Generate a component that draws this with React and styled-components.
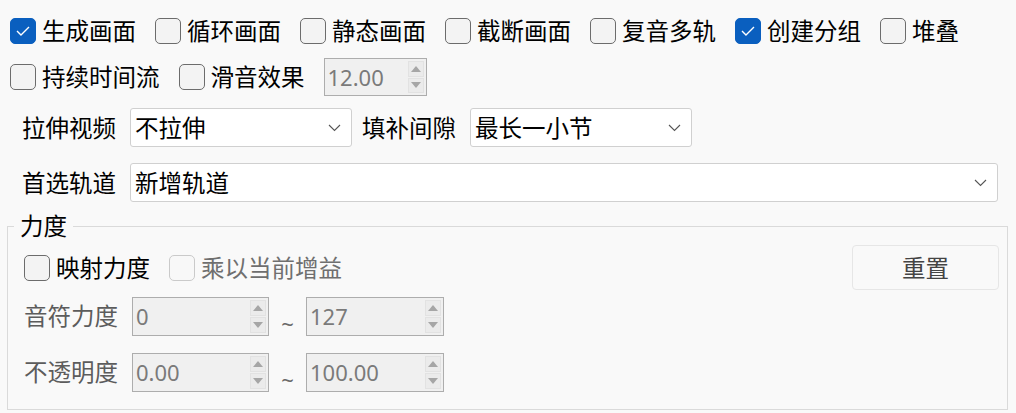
import React from 'react'
import styled, { createGlobalStyle } from 'styled-components'

const GlobalStyle = createGlobalStyle`
  html, body {
    margin: 0;
    padding: 0;
    background: #f9f9f9;
  }
  body {
    font-family: "Noto Sans", "Noto Sans CJK SC", sans-serif;
    font-size: 23.5px;
    line-height: 28px;
    color: #000;
  }
`

const Page = styled.div`
  width: 1016px;
  height: 413px;
  display: flex;
  flex-direction: column;
  overflow: hidden;
`

const Options = styled.div`
  display: flex;
  flex-direction: column;
  gap: 13px;
  padding: 17px 0 0 10px;
`

const OptionRow = styled.div`
  display: flex;
  align-items: center;
  gap: 19px;
  min-height: ${({ $h }) => $h || 26}px;
`

const CheckItem = styled.label`
  display: flex;
  align-items: center;
  gap: 6px;
  white-space: nowrap;
  color: ${({ $disabled }) => ($disabled ? '#6f6f6f' : '#000')};
`

const Box = styled.span`
  box-sizing: border-box;
  width: 26px;
  height: 26px;
  border-radius: 5px;
  display: flex;
  align-items: center;
  justify-content: center;
  flex: none;
  background: ${({ $checked, $disabled }) =>
    $checked ? '#0a5fbf' : $disabled ? '#f8f8f8' : '#f3f3f3'};
  border: 1.5px solid
    ${({ $checked, $disabled }) =>
      $checked ? '#0a5fbf' : $disabled ? '#cacaca' : '#6c6c6c'};
`

const FormRow = styled.div`
  display: flex;
  align-items: center;
  padding: 0 18px 0 22px;
  margin-top: ${({ $mt }) => $mt}px;
`

const Label = styled.span`
  white-space: nowrap;
  margin-right: ${({ $mr }) => ($mr != null ? $mr : 14)}px;
  color: ${({ $muted }) => ($muted ? '#5c5c5c' : '#000')};
`

const Combo = styled.div`
  box-sizing: border-box;
  height: 39px;
  width: ${({ $w }) => ($w ? `${$w}px` : 'auto')};
  flex: ${({ $w }) => ($w ? 'none' : '1')};
  display: flex;
  align-items: center;
  justify-content: space-between;
  padding: 0 10px 0 4px;
  background: #fff;
  border: 1px solid #d0d0d0;
  border-radius: 3px;
  margin-right: ${({ $mr }) => $mr || 0}px;
`

const Spin = styled.div`
  box-sizing: border-box;
  width: ${({ $w }) => $w}px;
  height: ${({ $h }) => $h || 39}px;
  display: flex;
  align-items: stretch;
  background: #f0f0f0;
  border: 1px solid #adadad;
  flex: none;
`

const SpinValue = styled.span`
  flex: 1;
  display: flex;
  align-items: center;
  padding-left: 3px;
  font-size: 22px;
  color: #7a7a7a;
`

const SpinArrows = styled.div`
  width: 16px;
  display: flex;
  flex-direction: column;
  padding: 2px 2px 2px 0;
  gap: 1px;
`

const ArrowBtn = styled.div`
  flex: 1;
  display: flex;
  align-items: center;
  justify-content: center;
  background: #ebebeb;
  border: 1px solid #e2e2e2;
`

const Group = styled.fieldset`
  margin: 11px 8px 0 7px;
  padding: 6px 8px 16px 16px;
  border: 1px solid #dadada;
  display: flex;
  flex-direction: column;
`

const Legend = styled.legend`
  margin-left: -10px;
  padding: 0 6px;
  line-height: 26px;
`

const GroupTop = styled.div`
  display: flex;
  align-items: center;
  justify-content: space-between;
  height: 45px;
`

const GroupRow = styled.div`
  display: flex;
  align-items: center;
  margin-top: ${({ $mt }) => $mt}px;
`

const Tilde = styled.span`
  width: 37px;
  text-align: center;
  color: #6a6a6a;
  font-size: 22px;
  padding-top: 14px;
`

const ResetButton = styled.button`
  box-sizing: border-box;
  width: 147px;
  height: 45px;
  background: #f9f9f9;
  border: 1px solid #e6e6e6;
  border-radius: 4px;
  font: inherit;
  color: #444;
  padding: 0;
`

const Check = ({ checked, disabled, children }) => (
  <CheckItem $disabled={disabled}>
    <Box $checked={checked} $disabled={disabled}>
      {checked && (
        <svg width="14" height="10" viewBox="0 0 14 10">
          <polyline points="1,5 5,9 13,1" fill="none" stroke="#fff" strokeWidth="1.4" />
        </svg>
      )}
    </Box>
    {children}
  </CheckItem>
)

const Chevron = () => (
  <svg width="13" height="8" viewBox="0 0 13 8">
    <polyline points="1,1 6.5,6.5 12,1" fill="none" stroke="#555" strokeWidth="1.1" />
  </svg>
)

const SpinBox = ({ value, width, height }) => (
  <Spin $w={width} $h={height}>
    <SpinValue>{value}</SpinValue>
    <SpinArrows>
      <ArrowBtn>
        <svg width="10" height="6" viewBox="0 0 10 6">
          <polygon points="0,6 5,0 10,6" fill="#a6a6a6" />
        </svg>
      </ArrowBtn>
      <ArrowBtn>
        <svg width="10" height="6" viewBox="0 0 10 6">
          <polygon points="0,0 5,6 10,0" fill="#a6a6a6" />
        </svg>
      </ArrowBtn>
    </SpinArrows>
  </Spin>
)

const flags = [
  ['生成画面', true],
  ['循环画面', false],
  ['静态画面', false],
  ['截断画面', false],
  ['复音多轨', false],
  ['创建分组', true],
  ['堆叠', false],
]

export default function App() {
  return (
    <Page>
      <GlobalStyle />
      <Options>
        <OptionRow>
          {flags.map(([text, on]) => (
            <Check key={text} checked={on}>
              {text}
            </Check>
          ))}
        </OptionRow>
        <OptionRow $h={38}>
          <Check>持续时间流</Check>
          <Check>滑音效果</Check>
          <SpinBox value="12.00" width={103} height={38} />
        </OptionRow>
      </Options>

      <FormRow $mt={12}>
        <Label>拉伸视频</Label>
        <Combo $w={222} $mr={10}>
          <span>不拉伸</span>
          <Chevron />
        </Combo>
        <Label $mr={14}>填补间隙</Label>
        <Combo $w={222}>
          <span>最长一小节</span>
          <Chevron />
        </Combo>
      </FormRow>

      <FormRow $mt={16}>
        <Label>首选轨道</Label>
        <Combo>
          <span>新增轨道</span>
          <Chevron />
        </Combo>
      </FormRow>

      <Group>
        <Legend>力度</Legend>
        <GroupTop>
          <OptionRow>
            <Check>映射力度</Check>
            <Check disabled>乘以当前增益</Check>
          </OptionRow>
          <ResetButton>重置</ResetButton>
        </GroupTop>
        <GroupRow $mt={5}>
          <Label $muted>音符力度</Label>
          <SpinBox value="0" width={137} />
          <Tilde>~</Tilde>
          <SpinBox value="127" width={138} />
        </GroupRow>
        <GroupRow $mt={14}>
          <Label $muted>不透明度</Label>
          <SpinBox value="0.00" width={137} />
          <Tilde>~</Tilde>
          <SpinBox value="100.00" width={138} />
        </GroupRow>
      </Group>
    </Page>
  )
}
